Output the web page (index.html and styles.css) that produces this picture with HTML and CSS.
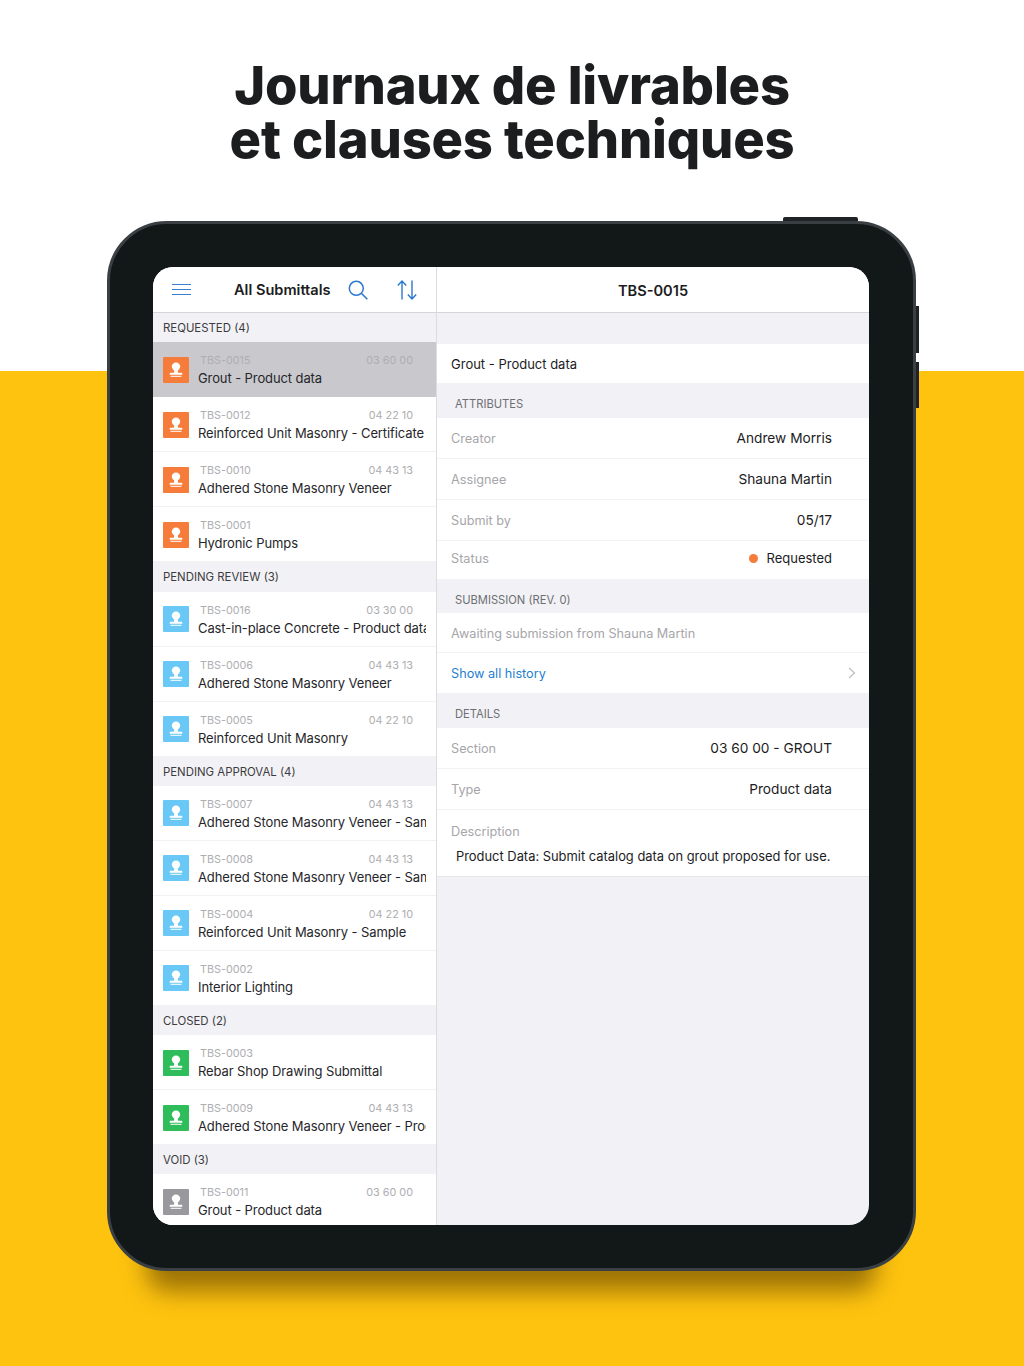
FILE: index.html
```html
<!DOCTYPE html>
<html lang="fr">

<head>
    <meta charset="utf-8">
    <meta name="viewport" content="width=device-width, initial-scale=1.0">
    <title>Journaux de livrables</title>
    <link rel="stylesheet" href="styles.css">
</head>

<body>

    <svg class="defs" width="0" height="0">
        <symbol id="stamp" viewBox="0 0 26 26">
            <circle cx="13" cy="9.6" r="4.2" fill="#fff" />
            <path d="M11.4 12.5h3.2l.5 3.2h3.4c.5 0 .8.3.8.8v1.2H6.700v-1.200c0-.5.3-.8.8-.8h3.400z" fill="#fff" />
            <rect x="7.500" y="18.800" width="11" height="1" fill="#fff" />
        </symbol>
    </svg>

    <h1>Journaux de livrables<br>et clauses techniques</h1>

    <div class="tablet">
        <span class="btn_top"></span>
        <span class="btn_side btn_side1"></span>
        <span class="btn_side btn_side2"></span>

        <div class="screen">
            <section class="liste">
                <header class="liste_top">
                    <svg class="ikon_menu" width="20" height="14" viewBox="0 0 20 14">
                        <path d="M0 1.500h19M0 6.500h19M0 11.500h19" stroke="#3b7fd0" stroke-width="1.100" fill="none" />
                    </svg>
                    <h2>All Submittals</h2>
                    <svg class="ikon_sog" width="20" height="20" viewBox="0 0 20 20">
                        <circle cx="8.300" cy="8.300" r="7" stroke="#2a78cf" stroke-width="1.500" fill="none" />
                        <path d="M13.300 13.300l6 6" stroke="#2a78cf" stroke-width="1.600" fill="none" />
                    </svg>
                    <svg class="ikon_sort" width="20" height="20" viewBox="0 0 20 20">
                        <path d="M5 19.500V1M.8 5.400L5 1l4.200 4.400M15 .5V19M10.800 14.600L15 19l4.200-4.400" stroke="#2a78cf" stroke-width="1.400" fill="none" />
                    </svg>
                </header>

                <h3>REQUESTED (4)</h3>
                <article class="ret valgt">
                    <svg class="stempel orange"><use href="#stamp" /></svg>
                    <div class="ret_tekst">
                        <p class="ret_meta"><span>TBS-0015</span><span>03 60 00</span></p>
                        <p class="ret_navn">Grout - Product data</p>
                    </div>
                </article>
                <article class="ret">
                    <svg class="stempel orange"><use href="#stamp" /></svg>
                    <div class="ret_tekst">
                        <p class="ret_meta"><span>TBS-0012</span><span>04 22 10</span></p>
                        <p class="ret_navn">Reinforced Unit Masonry - Certificate</p>
                    </div>
                </article>
                <article class="ret">
                    <svg class="stempel orange"><use href="#stamp" /></svg>
                    <div class="ret_tekst">
                        <p class="ret_meta"><span>TBS-0010</span><span>04 43 13</span></p>
                        <p class="ret_navn">Adhered Stone Masonry Veneer</p>
                    </div>
                </article>
                <article class="ret">
                    <svg class="stempel orange"><use href="#stamp" /></svg>
                    <div class="ret_tekst">
                        <p class="ret_meta"><span>TBS-0001</span></p>
                        <p class="ret_navn">Hydronic Pumps</p>
                    </div>
                </article>

                <h3>PENDING REVIEW (3)</h3>
                <article class="ret">
                    <svg class="stempel blaa"><use href="#stamp" /></svg>
                    <div class="ret_tekst">
                        <p class="ret_meta"><span>TBS-0016</span><span>03 30 00</span></p>
                        <p class="ret_navn">Cast-in-place Concrete - Product data</p>
                    </div>
                </article>
                <article class="ret">
                    <svg class="stempel blaa"><use href="#stamp" /></svg>
                    <div class="ret_tekst">
                        <p class="ret_meta"><span>TBS-0006</span><span>04 43 13</span></p>
                        <p class="ret_navn">Adhered Stone Masonry Veneer</p>
                    </div>
                </article>
                <article class="ret">
                    <svg class="stempel blaa"><use href="#stamp" /></svg>
                    <div class="ret_tekst">
                        <p class="ret_meta"><span>TBS-0005</span><span>04 22 10</span></p>
                        <p class="ret_navn">Reinforced Unit Masonry</p>
                    </div>
                </article>

                <h3>PENDING APPROVAL (4)</h3>
                <article class="ret">
                    <svg class="stempel blaa"><use href="#stamp" /></svg>
                    <div class="ret_tekst">
                        <p class="ret_meta"><span>TBS-0007</span><span>04 43 13</span></p>
                        <p class="ret_navn">Adhered Stone Masonry Veneer - Sample</p>
                    </div>
                </article>
                <article class="ret">
                    <svg class="stempel blaa"><use href="#stamp" /></svg>
                    <div class="ret_tekst">
                        <p class="ret_meta"><span>TBS-0008</span><span>04 43 13</span></p>
                        <p class="ret_navn">Adhered Stone Masonry Veneer - Sample</p>
                    </div>
                </article>
                <article class="ret">
                    <svg class="stempel blaa"><use href="#stamp" /></svg>
                    <div class="ret_tekst">
                        <p class="ret_meta"><span>TBS-0004</span><span>04 22 10</span></p>
                        <p class="ret_navn">Reinforced Unit Masonry - Sample</p>
                    </div>
                </article>
                <article class="ret">
                    <svg class="stempel blaa"><use href="#stamp" /></svg>
                    <div class="ret_tekst">
                        <p class="ret_meta"><span>TBS-0002</span></p>
                        <p class="ret_navn">Interior Lighting</p>
                    </div>
                </article>

                <h3>CLOSED (2)</h3>
                <article class="ret">
                    <svg class="stempel groen"><use href="#stamp" /></svg>
                    <div class="ret_tekst">
                        <p class="ret_meta"><span>TBS-0003</span></p>
                        <p class="ret_navn">Rebar Shop Drawing Submittal</p>
                    </div>
                </article>
                <article class="ret">
                    <svg class="stempel groen"><use href="#stamp" /></svg>
                    <div class="ret_tekst">
                        <p class="ret_meta"><span>TBS-0009</span><span>04 43 13</span></p>
                        <p class="ret_navn">Adhered Stone Masonry Veneer - Product</p>
                    </div>
                </article>

                <h3>VOID (3)</h3>
                <article class="ret">
                    <svg class="stempel graa"><use href="#stamp" /></svg>
                    <div class="ret_tekst">
                        <p class="ret_meta"><span>TBS-0011</span><span>03 60 00</span></p>
                        <p class="ret_navn">Grout - Product data</p>
                    </div>
                </article>
            </section>

            <section class="detalje">
                <header class="detalje_top">TBS-0015</header>
                <div class="luft"></div>
                <p class="titel">Grout - Product data</p>

                <h4>ATTRIBUTES</h4>
                <div class="felt"><span class="etiket">Creator</span><span>Andrew Morris</span></div>
                <div class="felt"><span class="etiket">Assignee</span><span>Shauna Martin</span></div>
                <div class="felt"><span class="etiket">Submit by</span><span>05/17</span></div>
                <div class="felt felt_lav"><span class="etiket">Status</span><span class="status">Requested</span></div>

                <h4>SUBMISSION (REV. 0)</h4>
                <div class="linje"><span class="etiket">Awaiting submission from Shauna Martin</span></div>
                <div class="linje historik">
                    <span>Show all history</span>
                    <svg width="8" height="12" viewBox="0 0 8 12">
                        <path d="M1 1l5.500 5L1 11" stroke="#c0c0c5" stroke-width="1.300" fill="none" />
                    </svg>
                </div>

                <h4>DETAILS</h4>
                <div class="felt"><span class="etiket">Section</span><span>03 60 00 - GROUT</span></div>
                <div class="felt"><span class="etiket">Type</span><span>Product data</span></div>
                <div class="beskriv">
                    <span class="etiket">Description</span>
                    <p>Product Data: Submit catalog data on grout proposed for use.</p>
                </div>
            </section>
        </div>
    </div>

</body></html>
```

FILE: styles.css
```css
* {
    box-sizing: border-box;
}

body {
    margin: 0;
    height: 1366px;
    overflow: hidden;
    background: linear-gradient(#fff 371px, #fec30f 371px);
    font-family: Inter, "Liberation Sans", sans-serif;
    color: #1c1c1e;
}

.defs {
    display: block;
    height: 0;
}

h1 {
    margin: 0;
    padding-top: 58px;
    height: 221px;
    text-align: center;
    font-size: 52.500px;
    line-height: 54px;
    font-weight: 800;
    letter-spacing: -0.2px;
    color: #1b1d1f;
}

.tablet {
    position: relative;
    width: 809px;
    height: 1050px;
    margin-left: 107px;
    padding: 43px 44px 43px 43px;
    background-color: #121718;
    border: 3px solid #3a3f44;
    border-radius: 60px;
    box-shadow: 0 60px 24px -40px rgba(90, 60, 0, .6);
}

.btn_top {
    position: absolute;
    top: -7px;
    left: 673px;
    width: 75px;
    height: 4px;
    background-color: #1f2326;
    border-radius: 2px 2px 0 0;
}

.btn_side {
    position: absolute;
    right: -6px;
    width: 3px;
    background-color: #1f2326;
}

.btn_side1 {
    top: 82px;
    height: 47px;
}

.btn_side2 {
    top: 138px;
    height: 46px;
}

.screen {
    display: flex;
    height: 958px;
    border-radius: 20px;
    overflow: hidden;
    background-color: #f2f2f6;
}

/* venstre liste */

.liste {
    width: 284px;
    flex-shrink: 0;
    border-right: 1px solid #dcdce0;
    overflow: hidden;
}

.liste_top {
    display: flex;
    align-items: center;
    height: 46px;
    padding-top: 1px;
    background-color: #fff;
    border-bottom: 1px solid #d6d6da;
}

.ikon_menu {
    margin-left: 19px;
}

.liste_top h2 {
    margin: 0 0 0 42px;
    width: 114px;
    font-size: 14.600px;
    font-weight: 600;
    white-space: nowrap;
}

.ikon_sog {
    margin-left: 0;
}

.ikon_sort {
    margin-left: 29px;
}

h3 {
    margin: 0;
    height: 29.300px;
    padding-left: 10px;
    font-size: 11.400px;
    line-height: 30px;
    font-weight: 400;
    color: #3c3c40;
    background-color: #f2f2f6;
}

.ret {
    display: flex;
    align-items: center;
    height: 55px;
    padding-left: 10px;
    background-color: #fff;
    box-shadow: inset 0 -1px 0 #f2f2f4;
}

.valgt {
    background-color: #c9c9cd;
    box-shadow: none;
}

.stempel {
    width: 26px;
    height: 26px;
    flex-shrink: 0;
    border-radius: 1px;
}

.orange {
    background-color: #f57c3a;
}

.blaa {
    background-color: #6ac8f6;
}

.groen {
    background-color: #2fbd5c;
}

.graa {
    background-color: #98989d;
}

.ret_tekst {
    width: 228px;
    margin-left: 9px;
    padding-top: 2px;
    overflow: hidden;
}

.ret_tekst p {
    margin: 0;
    white-space: nowrap;
}

.ret_meta {
    display: flex;
    justify-content: space-between;
    padding: 0 13px 0 2px;
    font-size: 10.800px;
    line-height: 15px;
    color: #aeaeb2;
}

.ret_navn {
    margin-top: 1px !important;
    font-size: 13px;
    line-height: 19px;
    letter-spacing: -0.1px;
    color: #26262a;
}

/* hoejre detaljer */

.detalje {
    flex: 1;
    font-size: 13.700px;
}

.detalje_top {
    height: 46px;
    padding-top: 1px;
    text-align: center;
    font-size: 14.600px;
    line-height: 46px;
    font-weight: 600;
    background-color: #fff;
    border-bottom: 1px solid #d6d6da;
}

.luft {
    height: 31px;
}

.titel {
    margin: 0;
    height: 39px;
    padding: 1px 0 0 14px;
    font-size: 13px;
    line-height: 39px;
    background-color: #fff;
}

h4 {
    margin: 0;
    height: 34.500px;
    padding: 14px 0 0 18px;
    font-size: 11.200px;
    line-height: 15px;
    font-weight: 400;
    color: #6e6e73;
}

.felt {
    display: flex;
    justify-content: space-between;
    align-items: center;
    height: 41px;
    padding: 0 37px 0 14px;
    background-color: #fff;
    box-shadow: inset 0 -1px 0 #f2f2f4;
}

.felt_lav {
    height: 38px;
    padding-bottom: 3px;
    box-shadow: none;
}

.etiket {
    font-size: 12.700px;
    color: #a6a6aa;
}

.status {
    display: flex;
    align-items: center;
    gap: 8px;
    font-size: 13px;
}

.status::before {
    content: "";
    width: 9px;
    height: 9px;
    border-radius: 50%;
    background-color: #f57c3a;
}

.linje {
    display: flex;
    align-items: center;
    height: 40px;
    padding: 0 13px 0 14px;
    background-color: #fff;
    box-shadow: inset 0 -1px 0 #f2f2f4;
}

.historik {
    justify-content: space-between;
    font-size: 12.700px;
    color: #1f7fd0;
    box-shadow: none;
}

.beskriv {
    height: 67px;
    padding: 13px 14px 0;
    background-color: #fff;
    border-bottom: 1px solid #e6e6ea;
    line-height: 16px;
}

.beskriv p {
    margin: 9px 0 0 5px;
    font-size: 12.900px;
    white-space: nowrap;
}
```
